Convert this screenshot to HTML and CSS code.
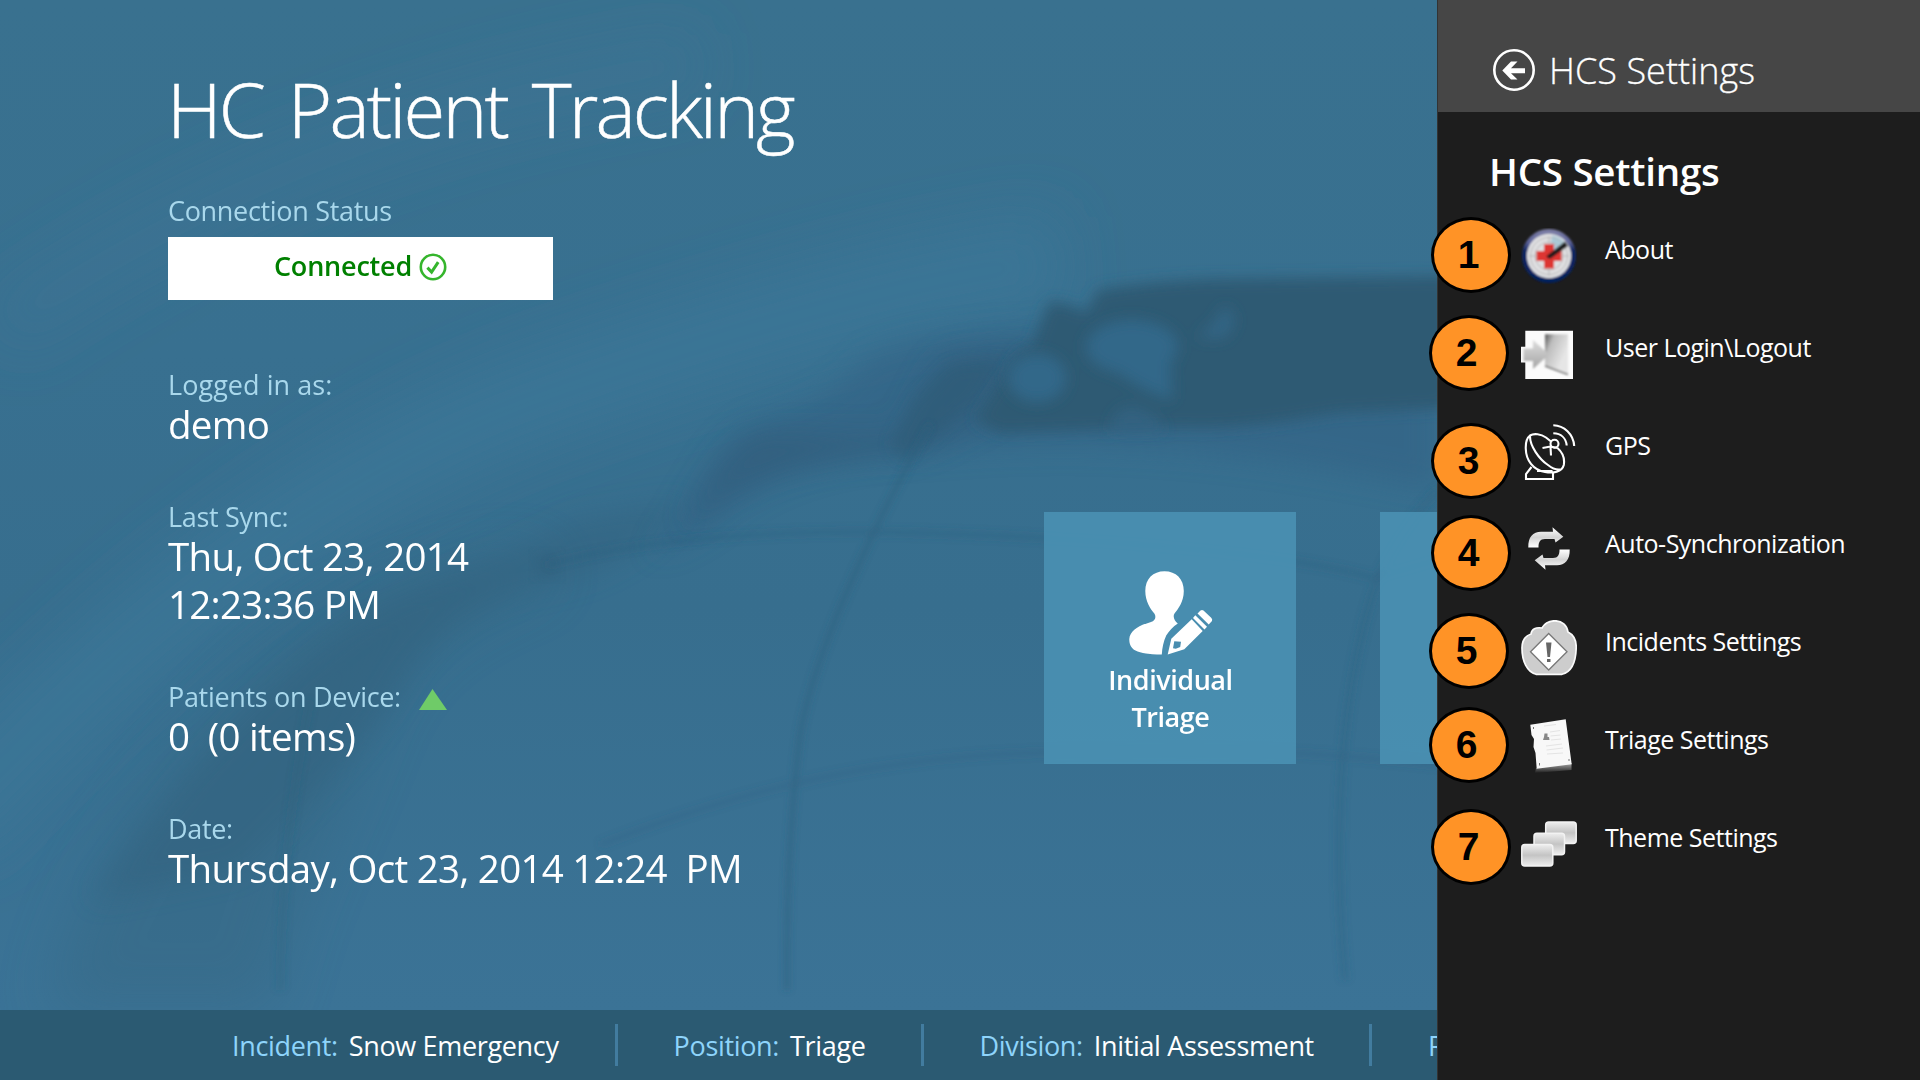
FILE: index.html
```html
<!DOCTYPE html>
<html lang="en">
<head>
<meta charset="utf-8">
<title>HC Patient Tracking</title>
<link rel="stylesheet" href="styles.css">
</head>
<body>
<div class="screen">
  <div class="app">
    <svg class="backdrop" viewBox="0 0 1437 1010" preserveAspectRatio="none" aria-hidden="true">
      <defs>
        <linearGradient id="base" x1="0" y1="0" x2="0" y2="1"><stop offset="0" stop-color="#39718f"/><stop offset=".35" stop-color="#387090"/><stop offset=".6" stop-color="#376e8e"/><stop offset="1" stop-color="#3b7396"/></linearGradient>
        <filter id="b2" x="-20%" y="-20%" width="140%" height="140%"><feGaussianBlur stdDeviation="3"/></filter>
        <filter id="b6" x="-20%" y="-20%" width="140%" height="140%"><feGaussianBlur stdDeviation="7"/></filter>
        <filter id="b14" x="-30%" y="-30%" width="160%" height="160%"><feGaussianBlur stdDeviation="14"/></filter>
        <filter id="b30" x="-30%" y="-30%" width="160%" height="160%"><feGaussianBlur stdDeviation="28"/></filter>
      </defs>
      <rect width="1437" height="1010" fill="url(#base)"/>
      <g fill="none" stroke="#3c7597" filter="url(#b30)">
        <path d="M-60 830Q240 500 560 390T1060 260" stroke-width="90" opacity=".8"/>
        <path d="M0 330Q300 120 700 60" stroke-width="60" opacity=".4"/>
      </g>
      <path d="M50 1010C80 860 170 750 270 660C340 600 420 575 520 555L560 575C460 610 400 650 370 730C340 820 290 900 270 1010Z" fill="#34657f" opacity=".4" filter="url(#b30)"/>
      <path d="M90 900C190 760 290 660 370 610C430 575 500 560 570 520L690 500C650 550 600 575 550 585C480 600 430 630 400 690C370 740 310 800 240 870Z" fill="#31607d" opacity=".45" filter="url(#b14)"/>
      <path d="M650 555C690 510 705 450 750 425C790 410 830 400 865 360C910 335 960 335 1050 330L1437 370V490C1200 440 1050 440 930 452C840 455 770 475 725 515C700 535 680 545 650 555Z" fill="#335f82" opacity=".5" filter="url(#b14)"/>
      <path d="M685 525C705 490 725 450 755 436C800 428 860 440 900 432C920 400 930 365 950 355L1035 348L1000 412C960 430 930 450 900 454C830 455 770 470 740 488C715 500 705 515 685 525Z" fill="#305d7b" opacity=".7" filter="url(#b14)"/>
      <path d="M1000 360L975 400L935 435L905 460L890 445L915 400L950 365Z" fill="#2f5c77" opacity=".6" filter="url(#b6)"/>
      <path d="M1098 290Q1150 281 1215 279L1450 276V408L1337 413Q1240 430 1184 427L1000 433L975 420L1020 350L1031 348L1049 302Q1070 303 1086 313Z" fill="#2d5a73" filter="url(#b6)"/>
      <g fill="#336889" filter="url(#b6)">
        <ellipse cx="1132" cy="347" rx="46" ry="27"/><path d="M1112 360H1170L1172 400Q1140 390 1112 368Z"/>
        <ellipse cx="1037" cy="378" rx="29" ry="24"/><path d="M1110 432Q1112 408 1132 406Q1158 412 1166 432Z" opacity=".55"/>
        <path d="M1196 338Q1218 322 1224 306Q1244 318 1224 338Z" opacity=".8"/>
      </g>
      <circle cx="547" cy="565" r="13" fill="#30617e" opacity=".5" filter="url(#b6)"/>
      <g fill="none" stroke="#2f607f" filter="url(#b2)">
        <path d="M930 425C870 530 812 660 800 735C792 800 786 880 787 990" stroke-width="5" opacity=".6"/>
        <path d="M547 565C640 540 760 531 870 532S1260 545 1374 578L1437 560" stroke-width="7" opacity=".3"/>
        <path d="M1437 490C1400 530 1380 570 1372 595C1340 700 1332 830 1345 980" stroke-width="8" opacity=".32"/>
        <path d="M600 845C740 790 880 755 1060 752S1300 750 1437 765" stroke-width="7" opacity=".22"/>
        <path d="M310 700C290 800 282 880 280 990" stroke-width="9" opacity=".2"/>
      </g>
    </svg>

    <main class="board">
      <section class="info">
        <h1 class="title">HC Patient Tracking</h1>
        <div class="label">Connection Status</div>
        <div class="status">
          <span>Connected</span>
          <svg width="28" height="28" viewBox="0 0 28 28" fill="none" stroke="#35b52c"><circle cx="14" cy="14" r="12.2" stroke-width="2.6"/><path d="M8.4 14.6l4.2 4.4 6.6-9.8" stroke-width="3"/></svg>
        </div>
        <div class="fields">
          <div class="field"><div class="label label--wide">Logged in as:</div><div class="value">demo</div></div>
          <div class="field"><div class="label">Last Sync:</div><div class="value">Thu, Oct 23, 2014
12:23:36 PM</div></div>
          <div class="field"><div class="label">Patients on Device: <svg class="up" width="28" height="21" viewBox="0 0 28 21"><path d="M13.5 0L28 21H0Z" fill="#6fcb68"/></svg></div><div class="value">0  (0 items)</div></div>
          <div class="field"><div class="label">Date:</div><div class="value">Thursday, Oct 23, 2014 12:24  PM</div></div>
        </div>
      </section>
      <section class="tiles">
        <div class="tile">
          <svg width="84" height="84" viewBox="0 0 84 84" fill="#fff"><path d="M35.5.3C47 .3 54.8 8 54.8 20C54.8 31 49 38 45.5 42.5C43.5 45.5 45.5 50 48.8 52.4C44 55.5 40 60 37.2 64.5C34.5 70.5 33.2 77 32.8 83.4C22 83.4 12 82.5 6.5 79.5C2 77 .2 73 .3 68C1 59.5 10 54.5 22 51C26 49.5 27.5 46.5 25.5 42.8C21.500 38 16.300 30.500 16.300 20C16.300 8 24 .3 35.500 .3Z"/><path fill-rule="evenodd" d="M38.700 83.400L42.300 67.700L62.700 48.300L73.700 60L55.300 78.300ZM45.300 70.200L44 77.300L46.800 77.800L51.200 76L52 70.700Z"/><path d="M64 47L66.300 44.300L78 55.700L75.500 58.400ZM68.500 42.500L71.500 39.600Q73 38.500 74.500 39.600L82.200 46.700Q83.700 48.300 83 50L79.700 53.600Z"/></svg>
          <div class="tile-name">Individual<br>Triage</div>
        </div>
        <div class="tile"></div>
      </section>
    </main>

    <footer class="bar">
      <div class="crumb"><span class="key">Incident:</span><span>Snow Emergency</span></div>
      <div class="crumb"><span class="key">Position:</span><span>Triage</span></div>
      <div class="crumb"><span class="key">Division:</span><span>Initial Assessment</span></div>
      <div class="crumb"><span class="key">R</span></div>
    </footer>
  </div>

  <aside class="panel">
    <header class="panel-head">
      <svg width="44" height="44" viewBox="0 0 44 44"><circle cx="22" cy="22" r="19.700" fill="none" stroke="#fff" stroke-width="2.600"/><path d="M10.300 22.500L19 13.500H25.500L19 20.300H33V25.200H19L25.500 31.500H19Z" fill="#fff"/></svg>
      <span>HCS Settings</span>
    </header>
    <h2 class="panel-title">HCS Settings</h2>
    <ul class="settings">
      <li class="row">
        <svg class="icon" viewBox="0 0 56 56"><defs><linearGradient id="ring" x1="0" y1="0" x2="0" y2="1"><stop offset="0" stop-color="#8182a8"/><stop offset=".25" stop-color="#5b6299"/><stop offset=".4" stop-color="#102663"/><stop offset="1" stop-color="#03205f"/></linearGradient><filter id="soft"><feGaussianBlur stdDeviation=".8"/></filter></defs><g filter="url(#soft)"><circle cx="28" cy="28" r="27" fill="url(#ring)"/><circle cx="28" cy="28" r="22.200" fill="#e0e0e2"/><path d="M28 28L31 7.500A21 21 0 0 1 45 16Z" fill="#a9cbd9"/><g fill="none" stroke="#b5b5b8"><circle cx="28" cy="28" r="18.500"/><circle cx="28" cy="28" r="14"/><path d="M28 8V48M8 28H48"/></g><path d="M23 16H33V23H40.500V33H33V40.500H23V33H15.500V23H23Z" fill="#dd3431"/><path d="M25.500 28L44 13.500L47 18L29.500 30.500Q26 31 25.500 28Z" fill="#1c1c1c"/></g></svg>
        <span>About</span><b class="badge b-a">1</b>
      </li>
      <li class="row">
        <svg class="icon" viewBox="0 0 56 56"><defs><linearGradient id="door" x1="0" y1="0" x2=".8" y2=".6"><stop offset="0" stop-color="#555"/><stop offset=".35" stop-color="#bdbdbd"/><stop offset="1" stop-color="#e6e6e6"/></linearGradient><linearGradient id="arr" x1="0" y1="0" x2="0" y2="1"><stop offset="0" stop-color="#ddd"/><stop offset="1" stop-color="#a5a5a5"/></linearGradient></defs><path d="M4.300 4.700H52V53H4.300V36.500H0V20.700H4.300Z" fill="#fbfbfb"/><g filter="url(#soft)"><path d="M24 8.300H47V48.500L24 40Z" fill="url(#door)"/><path d="M24 40L47 48.500" stroke="#777" stroke-width="1.800"/><path d="M2.500 22.500H12V14L28 28.500L12 43V35H2.500Z" fill="url(#arr)"/></g></svg>
        <span>User Login\Logout</span><b class="badge b-b">2</b>
      </li>
      <li class="row">
        <svg class="icon" viewBox="0 0 56 56" fill="none" stroke="#fff" stroke-width="2.100"><path d="M32.300 1.300C43 1.500 52.500 10 53.200 22M32.300 9.300C40 9.500 45 14 45.700 21.500M25 13.500C20 10 13 9 9 11.500C5 14.500 4.500 19 4.800 25C5 36 12 46 24 48C32 49.500 41 48 42.800 41C44 34 41 28 36.500 24M9 12.500C9 22 18 35 27 41C32 45 37 46.500 41 45M25 13.500L30 17.500M10.500 43L5 50V55H32V48M16 47H31.500M36.500 24L29.500 22.500L21.500 24M29.500 22.500L30 31.500"/><circle cx="33.500" cy="19.800" r="4"/></svg>
        <span>GPS</span><b class="badge b-c">3</b>
      </li>
      <li class="row">
        <svg class="icon" viewBox="0 0 56 56"><defs><linearGradient id="sy" x1="0" y1="0" x2="0" y2="1"><stop offset="0" stop-color="#fff"/><stop offset=".5" stop-color="#d4d4d4"/><stop offset="1" stop-color="#fff"/></linearGradient></defs><g fill="url(#sy)"><path d="M7.300 25.500C7 15 12 9.800 20 9.800H32L31.500 5.300L42.300 14.700L34.500 20.500L33.500 17H24C19 17 17.500 20 17.500 25.500Z"/><path transform="rotate(180 28 26.500)" d="M7.300 25.500C7 15 12 9.800 20 9.800H32L31.500 5.300L42.300 14.700L34.500 20.500L33.500 17H24C19 17 17.500 20 17.500 25.500Z"/></g></svg>
        <span>Auto-Synchronization</span><b class="badge b-d">4</b>
      </li>
      <li class="row">
        <svg class="icon" viewBox="0 0 56 56"><path d="M15 54.300C6 52 1 41 1 28C1 20 4 16 10 14C10.500 9 15 7 21 8C24 2.500 29 .8 34 .8C41 .8 46 5.500 47 12C53 15 55.200 20 55.200 27C55 42 50 52 41 54.300Z" fill="#cdcdcd" stroke="#fafafa" stroke-width="1.700"/><path d="M27.700 13.500L46 31.700L27.700 50L9.500 31.700Z" fill="#fff" stroke="#777" stroke-width="1.300"/><path d="M25 22.500H30.500L29 37H26.500ZM26 39H29.500V42H26Z" fill="#666"/></svg>
        <span>Incidents Settings</span><b class="badge b-d b-left">5</b>
      </li>
      <li class="row">
        <svg class="icon" viewBox="0 0 56 56"><defs><linearGradient id="sh" x1="0" y1="0" x2="0" y2="1"><stop offset="0" stop-color="#aaa"/><stop offset="1" stop-color="#1d1d1d"/></linearGradient></defs><path d="M15 50L50.500 45V52L14 55Z" fill="url(#sh)"/><path d="M9.300 6.700L44.700 1.300L50.700 46.300L15.700 50.700L14.500 35L12.500 29L13 21L10.500 17Z" fill="#f8f8f8"/><path d="M23 8L35 6.500M29 14L39 12.500M29.500 18L39.500 17M30 22L40 21M25 28L41 26M25.500 32L42 30M26 36L42 35" stroke="#e4e4e4" fill="none"/><path d="M23.500 15.500H26.500V19H28L28.500 22H22L23 19Z" fill="#888"/><path d="M18.500 45V47.500M48 41V43M12.500 9V11" stroke="#777"/></svg>
        <span>Triage Settings</span><b class="badge b-b">6</b>
      </li>
      <li class="row">
        <svg class="icon" viewBox="0 0 56 56"><defs><linearGradient id="th" x1="0" y1="0" x2="0" y2="1"><stop offset="0" stop-color="#eee"/><stop offset=".5" stop-color="#c4c4c4"/><stop offset="1" stop-color="#eee"/></linearGradient></defs><g fill="url(#th)" stroke="#f2f2f2" stroke-width="1.500"><rect x="24.700" y="6" width="30.500" height="21.500" rx="3"/><rect x="13" y="17.300" width="30.500" height="21.500" rx="3"/><rect x=".8" y="28.500" width="31" height="21.500" rx="3"/></g></svg>
        <span>Theme Settings</span><b class="badge b-d b-right">7</b>
      </li>
    </ul>
  </aside>
</div>
</body>
</html>
```
FILE: styles.css
```css
* { box-sizing: border-box; }

body {
  margin: 0;
  font-family: "Open Sans", "Noto Sans", sans-serif;
  color: #fff;
  background: #1d1d1d;
}

h1, h2, ul { margin: 0; padding: 0; }

svg { display: block; flex: none; }

.screen {
  display: grid;
  grid-template-columns: 1437px 1fr;
  width: 1920px;
  height: 1080px;
  overflow: hidden;
}

/* Start screen */
.app {
  position: relative;
  display: grid;
  grid-template-rows: 1010px 70px;
  min-width: 0;
  overflow: hidden;
}

.backdrop {
  position: absolute;
  top: 0;
  left: 0;
  width: 1437px;
  height: 1010px;
}

.board {
  position: relative;
  display: grid;
  grid-template-columns: 876px 1fr;
  padding-left: 168px;
  min-width: 0;
}

.info { padding-top: 59px; }

.title {
  margin-left: -1px;
  font-size: 76px;
  font-weight: 300;
  line-height: 100px;
  letter-spacing: -2.9px;
  word-spacing: 8px;
  -webkit-text-stroke: 0.5px #fff;
  white-space: nowrap;
}

.title + .label { margin-top: 36px; }

.label {
  display: flex;
  align-items: center;
  gap: 18px;
  height: 32px;
  font-size: 27px;
  line-height: 32px;
  letter-spacing: -0.32px;
  color: #a9d8ec;
}

.label--wide { letter-spacing: 0.05px; }

.up { margin-top: 5px; }

.status {
  display: flex;
  align-items: center;
  justify-content: center;
  gap: 7px;
  width: 385px;
  height: 63px;
  margin-top: 10px;
  padding-bottom: 3px;
  background: #fff;
  color: #008000;
  font-size: 27px;
  font-weight: 600;
  letter-spacing: -0.2px;
}

.status span { margin-top: -3px; }

.fields {
  display: flex;
  flex-direction: column;
  gap: 52px;
  margin-top: 69px;
}

.value {
  margin-top: -1px;
  margin-bottom: 1px;
  font-size: 38.5px;
  line-height: 48px;
  letter-spacing: -0.72px;
  white-space: pre;
}

.tiles {
  display: flex;
  gap: 84px;
  padding-top: 512px;
}

.tile {
  flex: none;
  display: flex;
  flex-direction: column;
  align-items: center;
  width: 252px;
  height: 252px;
  padding: 59px 0 0 1px;
  background: rgba(75, 147, 181, 0.85);
}

.tile-name {
  margin-top: 6px;
  font-size: 27px;
  font-weight: 600;
  line-height: 37px;
  letter-spacing: -0.45px;
  text-align: center;
}

.bar {
  position: relative;
  display: flex;
  align-items: center;
  padding-left: 176px;
  background: #2b5a72;
  font-size: 27px;
  letter-spacing: -0.34px;
  white-space: nowrap;
}

.crumb {
  display: flex;
  align-items: center;
  gap: 11px;
  height: 42px;
  padding: 1px 56px 0 56px;
  border-right: 3px solid #427c9f;
}

.crumb + .crumb { padding-right: 55px; }

.key { color: #8ed4fb; }

/* Settings flyout */
.panel {
  position: relative;
  background: #1d1d1d;
  border-left: 1px solid #333;
}

.panel-head {
  display: flex;
  align-items: center;
  gap: 13px;
  height: 112px;
  padding: 28px 0 0 54px;
  background: #464646;
  font-size: 36px;
  font-weight: 300;
  letter-spacing: 0.05px;
  -webkit-text-stroke: 0.3px #fff;
}

.panel-head span { margin-top: 1px; }

.panel-title {
  padding: 35px 0 0 51px;
  font-size: 38.5px;
  font-weight: 600;
  line-height: 48px;
  letter-spacing: -0.26px;
}

.settings {
  margin-top: 33px;
  list-style: none;
}

.row {
  position: relative;
  display: flex;
  gap: 28px;
  height: 98px;
  padding-left: 83px;
  font-size: 25px;
  line-height: 42px;
  letter-spacing: -0.5px;
}

.icon { width: 56px; height: 56px; }

.badge {
  position: absolute;
  left: -7px;
  top: -11px;
  width: 80px;
  height: 76px;
  padding-right: 5px;
  border: 3px solid #000;
  border-radius: 50%;
  background: #ff9326;
  color: #000;
  font: bold 39px/69px "Liberation Sans", Arial, sans-serif;
  letter-spacing: 0;
  text-align: center;
}

.b-b { left: -9px; }
.b-c { top: -1px; }
.b-d { top: -7px; }
.b-left { left: -9px; }
.b-right { left: -7px; }
```
